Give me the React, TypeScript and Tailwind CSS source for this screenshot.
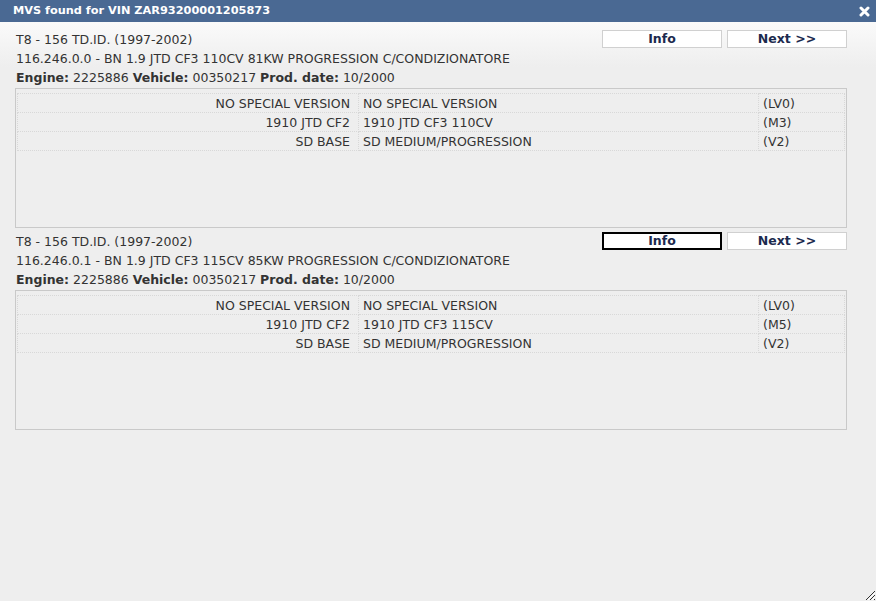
import React from "react"

type Row = { code: string; name: string; tag: string }

type Mvs = {
  model: string
  desc: string
  engine: string
  vehicle: string
  prodDate: string
  rows: Row[]
  focused?: boolean
}

const items: Mvs[] = [
  {
    model: "T8 - 156 TD.ID. (1997-2002)",
    desc: "116.246.0.0 - BN 1.9 JTD CF3 110CV 81KW PROGRESSION C/CONDIZIONATORE",
    engine: "2225886",
    vehicle: "00350217",
    prodDate: "10/2000",
    rows: [
      { code: "NO SPECIAL VERSION", name: "NO SPECIAL VERSION", tag: "(LV0)" },
      { code: "1910 JTD CF2", name: "1910 JTD CF3 110CV", tag: "(M3)" },
      { code: "SD BASE", name: "SD MEDIUM/PROGRESSION", tag: "(V2)" },
    ],
  },
  {
    model: "T8 - 156 TD.ID. (1997-2002)",
    desc: "116.246.0.1 - BN 1.9 JTD CF3 115CV 85KW PROGRESSION C/CONDIZIONATORE",
    engine: "2225886",
    vehicle: "00350217",
    prodDate: "10/2000",
    focused: true,
    rows: [
      { code: "NO SPECIAL VERSION", name: "NO SPECIAL VERSION", tag: "(LV0)" },
      { code: "1910 JTD CF2", name: "1910 JTD CF3 115CV", tag: "(M5)" },
      { code: "SD BASE", name: "SD MEDIUM/PROGRESSION", tag: "(V2)" },
    ],
  },
]

function Btn({ label, focused }: { label: string; focused?: boolean }) {
  return (
    <button
      className={
        "h-[18px] w-[120px] bg-white text-[12.5px] font-bold leading-none text-[#1c2a4e] " +
        (focused ? "border-2 border-black" : "border border-[#d0d0d0]")
      }
    >
      {label}
    </button>
  )
}

function MvsBlock({ item }: { item: Mvs }) {
  return (
    <div>
      <div className="flex h-5 items-start justify-between pl-4 pr-[29px]">
        <span className="pt-[2px] leading-[18px]">{item.model}</span>
        <div className="mt-[1px] flex gap-[5px]">
          <Btn label="Info" focused={item.focused} />
          <Btn label="Next >>" />
        </div>
      </div>
      <div className="flex h-5 items-center pl-4 pt-[1px]">{item.desc}</div>
      <div className="flex h-[18px] items-center pl-4">
        <b>Engine:</b>&nbsp;{item.engine}&nbsp;<b>Vehicle:</b>&nbsp;{item.vehicle}&nbsp;
        <b>Prod. date:</b>&nbsp;{item.prodDate}
      </div>
      <div className="ml-[15px] mt-[1px] h-[140px] w-[832px] border border-[#c9c9c9] px-[1px] pt-[4px]">
        <table className="w-full border-collapse">
          <tbody>
            {item.rows.map((r) => (
              <tr key={r.code} className="h-[19px] leading-[17px]">
                <td className="w-[341px] border border-dotted border-[#d8d8d8] py-0 pr-[8px] text-right">{r.code}</td>
                <td className="w-[400px] border border-dotted border-[#d8d8d8] py-0 pl-[4px]">{r.name}</td>
                <td className="border border-dotted border-[#d8d8d8] py-0 pl-[4px]">{r.tag}</td>
              </tr>
            ))}
          </tbody>
        </table>
      </div>
    </div>
  )
}

export default function App() {
  return (
    <div
      className="relative flex h-[601px] w-[876px] flex-col overflow-hidden bg-[#eeeeee] text-[12.5px] text-[#333333]"
      style={{ fontFamily: '"DejaVu Sans", Verdana, sans-serif' }}
    >
      <div className="flex h-[22px] items-center justify-between bg-[#4a6993] pl-[13px] pr-[6px]">
        <span className="text-[11.3px] font-bold text-white">MVS found for VIN ZAR93200001205873</span>
        <svg width="11" height="11" viewBox="0 0 11 11">
          <path d="M2 2 L9 9 M9 2 L2 9" stroke="white" strokeWidth="3" strokeLinecap="round" />
        </svg>
      </div>
      <div className="flex flex-1 flex-col gap-[3px] bg-[linear-gradient(to_bottom,#fafafa_0px,#eeeeee_45px)] pt-[7px]">
        {items.map((item, i) => (
          <MvsBlock key={i} item={item} />
        ))}
      </div>
      <svg className="absolute bottom-0 right-0" width="14" height="14" viewBox="0 0 14 14">
        <path d="M13 4 L4 13 M13 8 L8 13 M13 12 L12 13" stroke="#333" strokeWidth="1" />
        <path d="M13 6 L6 13 M13 10 L10 13" stroke="#fff" strokeWidth="1" />
      </svg>
    </div>
  )
}
